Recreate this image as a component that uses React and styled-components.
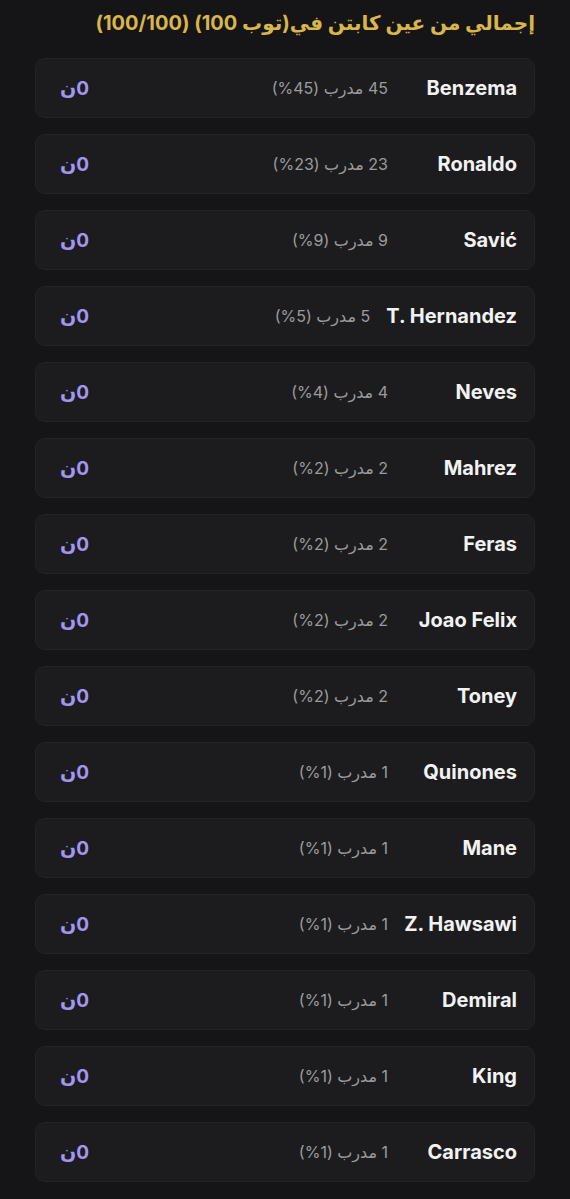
import React from "react";
import styled, { createGlobalStyle } from "styled-components";

const captains = [
  { name: "Benzema", count: 45, pct: 45 },
  { name: "Ronaldo", count: 23, pct: 23 },
  { name: "Savić", count: 9, pct: 9 },
  { name: "T. Hernandez", count: 5, pct: 5 },
  { name: "Neves", count: 4, pct: 4 },
  { name: "Mahrez", count: 2, pct: 2 },
  { name: "Feras", count: 2, pct: 2 },
  { name: "Joao Felix", count: 2, pct: 2 },
  { name: "Toney", count: 2, pct: 2 },
  { name: "Quinones", count: 1, pct: 1 },
  { name: "Mane", count: 1, pct: 1 },
  { name: "Z. Hawsawi", count: 1, pct: 1 },
  { name: "Demiral", count: 1, pct: 1 },
  { name: "King", count: 1, pct: 1 },
  { name: "Carrasco", count: 1, pct: 1 }
];

const GlobalStyle = createGlobalStyle`
  html, body {
    margin: 0;
    background: #151517;
  }
  body {
    font-family: Inter, "DejaVu Sans", sans-serif;
  }
`;

const Page = styled.div`
  direction: rtl;
  min-height: 1199px;
  padding: 7px 35px 16px;
  box-sizing: border-box;
  background: #151517;
`;

const Title = styled.h2`
  margin: 0 0 19px;
  font-size: 20px;
  font-weight: 700;
  line-height: 32px;
  color: #d8b64c;
`;

const List = styled.div`
  display: flex;
  flex-direction: column;
  gap: 16px;
`;

const Card = styled.div`
  display: flex;
  align-items: center;
  height: 60px;
  padding: 0 17px 0 24px;
  background: #1c1c1e;
  border: 1px solid #242426;
  border-radius: 10px;
  box-sizing: border-box;
`;

const Name = styled.div`
  min-width: 113px;
  font-size: 20px;
  font-weight: 700;
  color: #f2f2f2;
  white-space: nowrap;
`;

const Count = styled.div`
  margin-right: 16px;
  font-size: 16px;
  color: #9b9b9d;
  white-space: nowrap;
`;

const Points = styled.div`
  margin-right: auto;
  font-size: 19px;
  font-weight: 700;
  color: #a196f2;
`;

const CaptainRow = ({ captain }) => (
  <Card>
    <Name>{captain.name}</Name>
    <Count>
      {captain.count} مدرب ({captain.pct}%)
    </Count>
    <Points>0ن</Points>
  </Card>
);

export default function App() {
  return (
    <Page>
      <GlobalStyle />
      <Title>إجمالي من عين كابتن في(توب 100) (100/100)</Title>
      <List>
        {captains.map(c => (
          <CaptainRow key={c.name} captain={c} />
        ))}
      </List>
    </Page>
  );
}
